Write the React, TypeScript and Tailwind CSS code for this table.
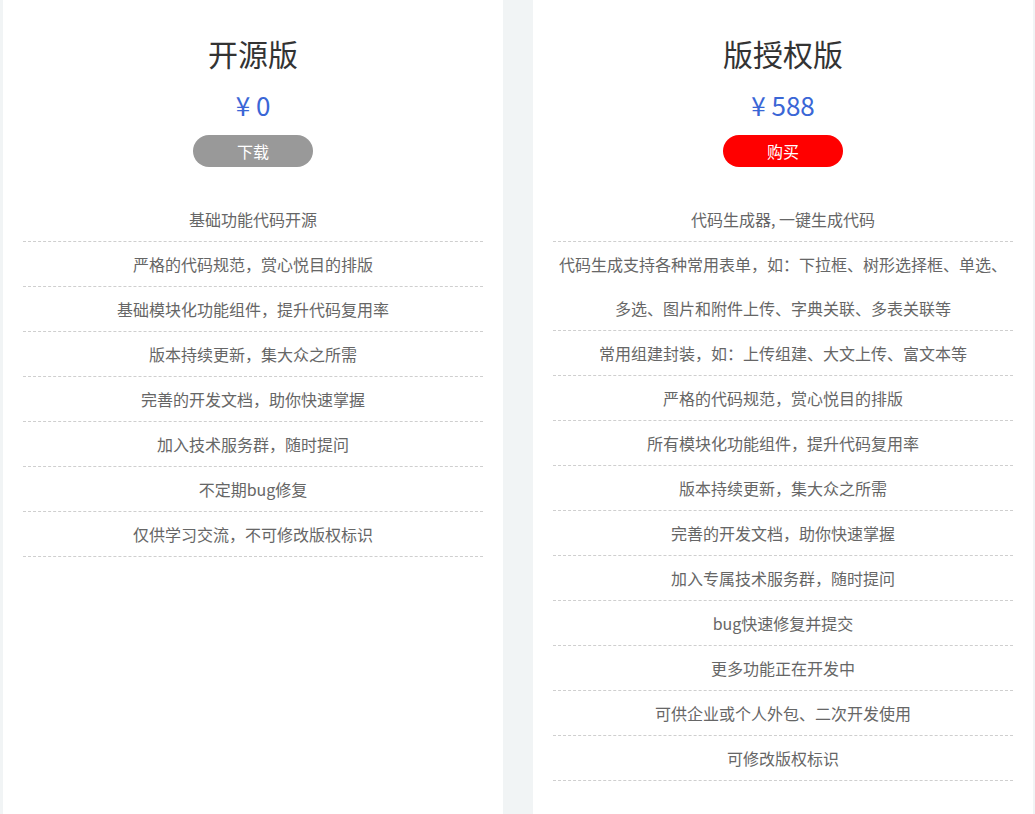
import React from "react";

const free = [
  "基础功能代码开源",
  "严格的代码规范，赏心悦目的排版",
  "基础模块化功能组件，提升代码复用率",
  "版本持续更新，集大众之所需",
  "完善的开发文档，助你快速掌握",
  "加入技术服务群，随时提问",
  "不定期bug修复",
  "仅供学习交流，不可修改版权标识",
];

const paid = [
  "代码生成器, 一键生成代码",
  "代码生成支持各种常用表单，如：下拉框、树形选择框、单选、多选、图片和附件上传、字典关联、多表关联等",
  "常用组建封装，如：上传组建、大文上传、富文本等",
  "严格的代码规范，赏心悦目的排版",
  "所有模块化功能组件，提升代码复用率",
  "版本持续更新，集大众之所需",
  "完善的开发文档，助你快速掌握",
  "加入专属技术服务群，随时提问",
  "bug快速修复并提交",
  "更多功能正在开发中",
  "可供企业或个人外包、二次开发使用",
  "可修改版权标识",
];

function Card({
  title,
  price,
  btn,
  btnClass,
  items,
}: {
  title: string;
  price: string;
  btn: string;
  btnClass: string;
  items: string[];
}) {
  return (
    <div className="w-[500px] shrink-0 bg-white pt-[33px] px-[20px] flex flex-col items-center">
      <div className="text-[30px] leading-[40px] text-[#333]">{title}</div>
      <div className="mt-[14px] text-[26px] leading-[36px] text-[#3a66d6]">{price}</div>
      <div
        className={`mt-[12px] w-[120px] h-[32px] rounded-full flex items-center justify-center text-white text-[16px] ${btnClass}`}
      >
        {btn}
      </div>
      <ul className="mt-[30px] w-full">
        {items.map((t) => (
          <li
            key={t}
            className="text-center text-[16px] leading-[44px] text-[#666] border-b border-dashed border-[#cfcfcf]"
          >
            {t}
          </li>
        ))}
      </ul>
    </div>
  );
}

export default function App() {
  return (
    <div
      className="w-[1035px] h-[814px] overflow-hidden bg-[#f1f4f5] flex pl-[3px] gap-[30px]"
      style={{ fontFamily: '"Noto Sans CJK SC", "Noto Sans", sans-serif' }}
    >
      <Card title="开源版" price="¥ 0" btn="下载" btnClass="bg-[#999999]" items={free} />
      <Card title="版授权版" price="¥ 588" btn="购买" btnClass="bg-[#ff0000]" items={paid} />
    </div>
  );
}
